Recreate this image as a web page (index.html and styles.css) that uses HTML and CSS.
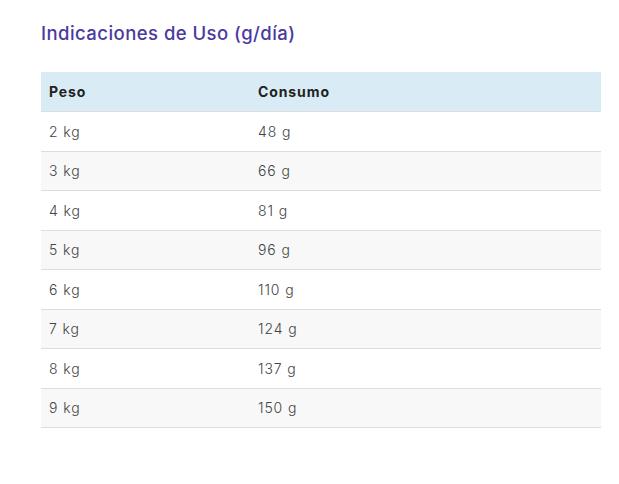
FILE: index.html
```html
<!DOCTYPE html>
<html lang="es">
<head>
<meta charset="utf-8">
<title>Indicaciones de Uso</title>
<link rel="stylesheet" href="styles.css">
</head>
<body>
<section class="usage">
  <h2 class="usage-title">Indicaciones de Uso (g/día)</h2>
  <table class="usage-table">
    <thead>
      <tr><th class="col-weight">Peso</th><th>Consumo</th></tr>
    </thead>
    <tbody>
      <tr><td>2 kg</td><td>48 g</td></tr>
      <tr><td>3 kg</td><td>66 g</td></tr>
      <tr><td>4 kg</td><td>81 g</td></tr>
      <tr><td>5 kg</td><td>96 g</td></tr>
      <tr><td>6 kg</td><td>110 g</td></tr>
      <tr><td>7 kg</td><td>124 g</td></tr>
      <tr><td>8 kg</td><td>137 g</td></tr>
      <tr><td>9 kg</td><td>150 g</td></tr>
    </tbody>
  </table>
</section>
</body>
</html>
```
FILE: styles.css
```css
html, body {
  margin: 0;
  background: #ffffff;
}
body {
  font-family: Inter, "Noto Sans", "Liberation Sans", sans-serif;
  color: #333333;
}
.usage {
  padding: 21px 18px 0 41px;
}
.usage-title {
  margin: 0 0 27px 0;
  font-size: 18.5px;
  line-height: 24px;
  font-weight: 500;
  letter-spacing: 0.45px;
  color: #4b3a9e;
}
.usage-table {
  width: 560px;
  border-collapse: collapse;
  font-size: 14px;
}
.usage-table th {
  background: #d9ecf5;
  text-align: left;
  font-weight: 700;
  color: #222222;
  letter-spacing: 0.9px;
  height: 39px;
  padding: 0 8px;
  border-bottom: 1px solid #dddddd;
}
.col-weight {
  width: 193px;
}
.usage-table td {
  height: 38.5px;
  padding: 0 8px;
  font-weight: 300;
  color: #444444;
  letter-spacing: 0.9px;
  border-bottom: 1px solid #dddddd;
}
.usage-table tbody tr:nth-child(even) td {
  background: #f8f8f8;
}
```
